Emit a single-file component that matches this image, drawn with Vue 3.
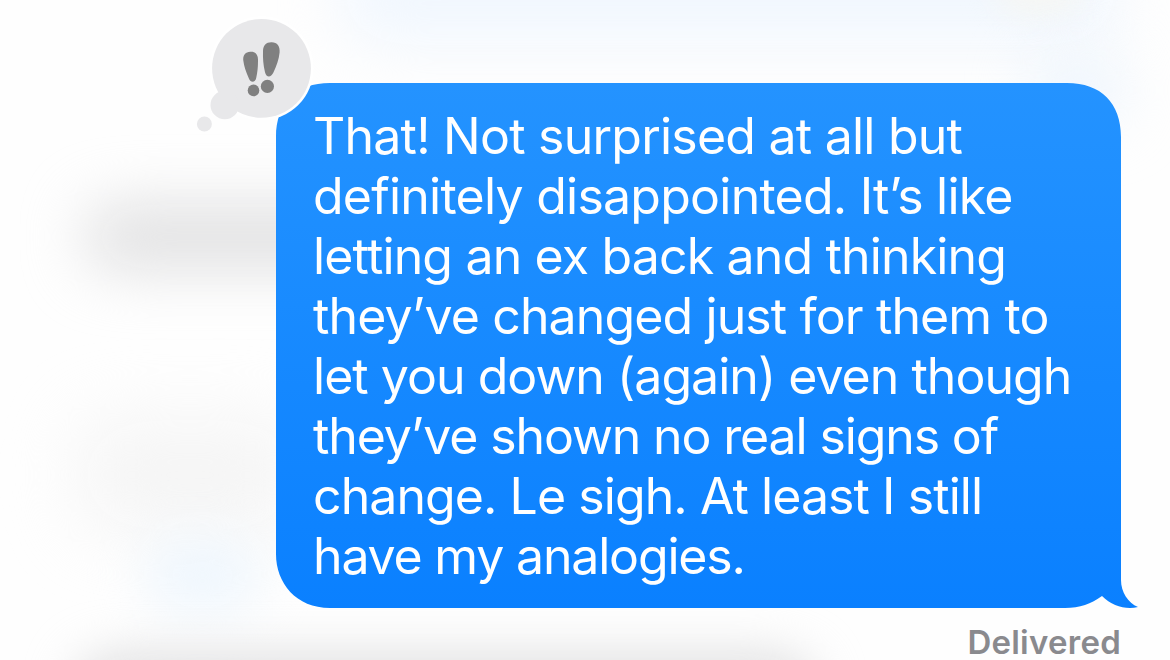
<template>
  <main class="screen">
    <div class="backdrop">
      <span class="haze haze-top"></span>
      <span class="haze haze-yellow"></span>
      <span class="haze haze-right"></span>
      <span class="haze haze-gray"></span>
      <span class="haze haze-light"></span>
      <span class="haze haze-blue"></span>
      <span class="haze haze-bottom"></span>
    </div>

    <section class="message">
      <div class="bubble">
        <svg class="shape" width="863" height="525" viewBox="0 0 863 525">
          <defs>
            <linearGradient id="bubbleFill" x1="0" y1="0" x2="0" y2="1">
              <stop offset="0" stop-color="#2493ff" />
              <stop offset="1" stop-color="#0a80ff" />
            </linearGradient>
          </defs>
          <path
            fill="url(#bubbleFill)"
            d="M54 0H791C825 0 845 20 845 54V497C845 509 852 520 862 524C850 527 836 523 826 513C815 521 804 525 789 525H54C20 525 0 500 0 471V54C0 20 20 0 54 0Z"
          />
        </svg>
        <p class="text">
          <span
            v-for="line in lines"
            :key="line.text"
            class="line"
            :style="{ letterSpacing: line.spacing + 'px' }"
          >{{ line.text }}</span>
        </p>
        <svg class="reaction" width="124" height="124" viewBox="192 12 124 124">
          <circle cx="261.5" cy="68.3" r="52" fill="#fff" />
          <g fill="#e8e8ea">
            <circle cx="261.5" cy="68.3" r="49.4" />
            <circle cx="224.8" cy="105" r="14.3" />
            <circle cx="204.4" cy="124" r="7.5" />
          </g>
          <g fill="#808080">
            <path d="M250.2 51.8C255 51.3 258 54.3 258 59.5C258.1 67 257.5 72 256.3 77.5C255.5 82.7 250.8 83.1 248.9 78.5C245.8 71.5 244 66 243.3 60.5C242.7 55.5 245 52.2 250.2 51.8Z" />
            <path d="M271.7 42.3C277.2 42.5 280.2 46 279.6 52.5C278.9 59.5 276.5 66 273.3 72.8C270.8 78 266.2 77.6 265 72.2C263.2 64.5 262.8 58.5 263 51C263.2 45.2 266.3 42.1 271.7 42.3Z" />
            <circle cx="253.5" cy="90.4" r="5.8" />
            <circle cx="267.4" cy="86.4" r="6.6" />
          </g>
        </svg>
      </div>
      <p class="status">Delivered</p>
    </section>
  </main>
</template>

<script setup>
const lines = [
  { text: 'That! Not surprised at all but', spacing: -0.77 },
  { text: 'definitely disappointed. It’s like', spacing: -0.76 },
  { text: 'letting an ex back and thinking', spacing: -0.84 },
  { text: 'they’ve changed just for them to', spacing: -0.88 },
  { text: 'let you down (again) even though', spacing: -0.97 },
  { text: 'they’ve shown no real signs of', spacing: -1.13 },
  { text: 'change. Le sigh. At least I still', spacing: -0.93 },
  { text: 'have my analogies.', spacing: -1.18 }
]
</script>

<style>
body {
  margin: 0;
}
</style>

<style scoped>
.screen {
  position: relative;
  width: 1170px;
  height: 660px;
  overflow: hidden;
  background: #fefefe;
  font-family: Inter, "Liberation Sans", sans-serif;
}
.backdrop {
  position: absolute;
  inset: 0;
}
.haze {
  position: absolute;
  border-radius: 40px;
  filter: blur(30px);
}
.haze-top {
  left: 340px;
  top: -60px;
  width: 780px;
  height: 105px;
  background: #f1f7fe;
}
.haze-yellow {
  left: 1000px;
  top: -35px;
  width: 80px;
  height: 45px;
  background: #f7f6f0;
  filter: blur(18px);
}
.haze-right {
  left: 1030px;
  top: 60px;
  width: 95px;
  height: 60px;
  background: #ebf4fd;
}
.haze-gray {
  left: 84px;
  top: 204px;
  width: 400px;
  height: 66px;
  background: #e1e1e2;
  filter: blur(29px);
}
.haze-light {
  left: 80px;
  top: 420px;
  width: 220px;
  height: 110px;
  background: #f5f5f5;
  filter: blur(34px);
}
.haze-blue {
  left: 145px;
  top: 540px;
  width: 115px;
  height: 70px;
  background: #eef6fd;
  filter: blur(26px);
}
.haze-bottom {
  left: 75px;
  top: 654px;
  width: 740px;
  height: 80px;
  background: #dfdfe0;
  filter: blur(24px);
}
.message {
  position: relative;
  display: flex;
  flex-direction: column;
  width: 845px;
  margin-left: 276px;
  padding-top: 83px;
}
.bubble {
  position: relative;
  height: 525px;
  box-sizing: border-box;
  padding: 23px 37px 22px;
}
.shape {
  position: absolute;
  left: 0;
  top: 0;
}
.text {
  position: relative;
  display: flex;
  flex-direction: column;
  margin: 0;
  color: #fff;
  font-size: 50px;
  line-height: 60px;
}
.line {
  white-space: nowrap;
}
.reaction {
  position: absolute;
  left: -84px;
  top: -71px;
}
.status {
  margin: 16px 0 0;
  text-align: right;
  color: #8a8a8e;
  font-size: 33px;
  font-weight: 600;
  line-height: 36px;
  letter-spacing: 0.25px;
}
</style>
